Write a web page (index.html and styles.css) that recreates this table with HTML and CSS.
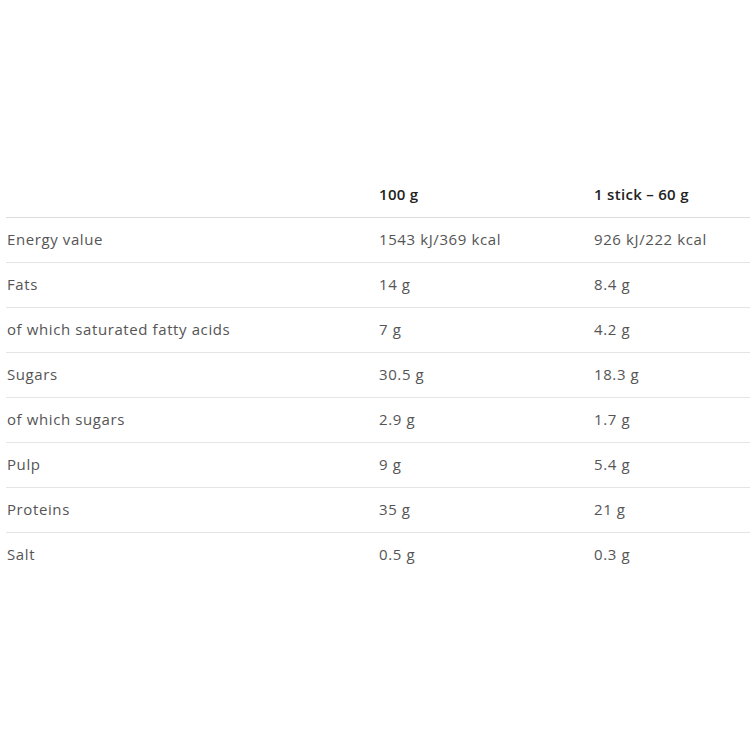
FILE: index.html
```html
<!DOCTYPE html>
<html>
<head>
<meta charset="utf-8">
<link rel="stylesheet" href="styles.css">
</head>
<body>
<table class="nutri">
  <thead>
    <tr><th></th><th>100 g</th><th>1 stick – 60 g</th></tr>
  </thead>
  <tbody>
    <tr><td>Energy value</td><td>1543 kJ/369 kcal</td><td>926 kJ/222 kcal</td></tr>
    <tr><td>Fats</td><td>14 g</td><td>8.4 g</td></tr>
    <tr><td>of which saturated fatty acids</td><td>7 g</td><td>4.2 g</td></tr>
    <tr><td>Sugars</td><td>30.5 g</td><td>18.3 g</td></tr>
    <tr><td>of which sugars</td><td>2.9 g</td><td>1.7 g</td></tr>
    <tr><td>Pulp</td><td>9 g</td><td>5.4 g</td></tr>
    <tr><td>Proteins</td><td>35 g</td><td>21 g</td></tr>
    <tr><td>Salt</td><td>0.5 g</td><td>0.3 g</td></tr>
  </tbody>
</table>
</body>
</html>
```
FILE: styles.css
```css
html, body {
  margin: 0;
  padding: 0;
  background: #fff;
}
body {
  padding: 173px 0 0 6px;
  font-family: "Open Sans", "Liberation Sans", sans-serif;
}
.nutri {
  width: 744px;
  border-collapse: collapse;
  table-layout: fixed;
}
.nutri th, .nutri td {
  height: 42px;
  padding: 0 0 2px 1px;
  text-align: left;
  vertical-align: middle;
  font-size: 15px;
  white-space: nowrap;
  letter-spacing: 0.6px;
}
.nutri th:nth-child(1), .nutri td:nth-child(1) { width: 371px; }
.nutri th:nth-child(2), .nutri td:nth-child(2) { width: 214px; }
.nutri th {
  font-weight: 600;
  color: #222;
  letter-spacing: 0.3px;
  border-bottom: 1px solid #ddd;
}
.nutri td {
  font-weight: 400;
  color: #555;
  border-bottom: 1px solid #e4e4e4;
}
.nutri tbody tr:last-child td {
  border-bottom: none;
}
```
